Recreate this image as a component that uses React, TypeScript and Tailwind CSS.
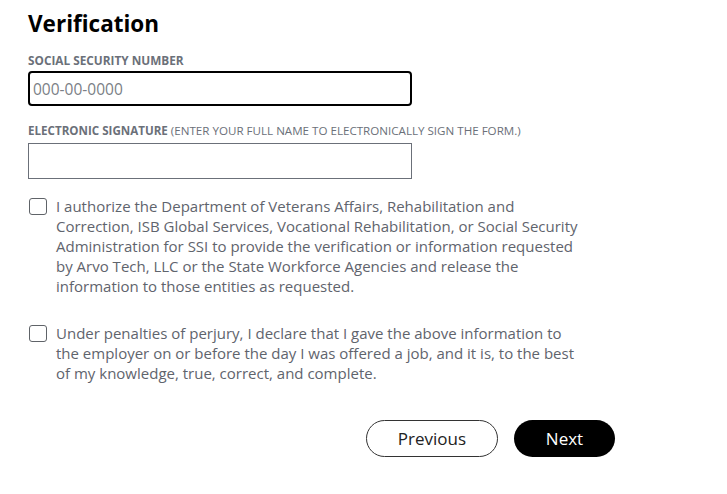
import { useState } from 'react';

const font = { fontFamily: '"Open Sans", "Noto Sans", Arial, sans-serif' };

function Check({ children }: { children: React.ReactNode }) {
  const [on, setOn] = useState(false);
  return (
    <label className="flex items-start gap-[9px] cursor-pointer">
      <button
        type="button"
        onClick={() => setOn(!on)}
        className="mt-[2px] ml-px w-[18px] h-[17px] shrink-0 rounded-[3px] border-[1.5px] border-[#5f6368] bg-white"
      >
        {on && (
          <svg viewBox="0 0 16 16" className="w-full h-full">
            <path d="M3 8l3.5 3.5L13 5" fill="none" stroke="#333" strokeWidth="2" />
          </svg>
        )}
      </button>
      <span className="text-[15px] leading-[20px] text-[#5f646d] w-[528px]">{children}</span>
    </label>
  );
}

export default function App() {
  return (
    <div className="min-h-screen bg-white" style={font}>
      <div className="pl-[28px] pt-[8px] w-[615px]">
        <h1 className="text-[22.5px] leading-[32px] font-bold text-black">Verification</h1>

        <div className="mt-[13px] text-[11.8px] leading-[14px] font-bold text-[#6b7079] uppercase">
          Social Security Number
        </div>
        <input
          placeholder="000-00-0000"
          className="mt-[4px] block w-[384px] h-[35px] px-[3px] border-2 border-black rounded-[4px] text-[15.5px] text-[#333] placeholder:text-[#7b7f86] outline-none"
        />

        <div className="mt-[18px] text-[11.6px] leading-[14px] text-[#6b7079] uppercase">
          <span className="font-bold">Electronic Signature</span> (Enter your full name to electronically sign the form.)
        </div>
        <input className="mt-[5px] block w-[384px] h-[36px] px-[3px] border border-[#6b7079] text-[15px] text-[#333] outline-none" />

        <div className="mt-[17px] flex flex-col gap-[27px]">
          <Check>
            I authorize the Department of Veterans Affairs, Rehabilitation and Correction, ISB Global Services,
            Vocational Rehabilitation, or Social Security Administration for SSI to provide the verification or
            information requested by Arvo Tech, LLC or the State Workforce Agencies and release the information to
            those entities as requested.
          </Check>
          <Check>
            Under penalties of perjury, I declare that I gave the above information to the employer on or before the
            day I was offered a job, and it is, to the best of my knowledge, true, correct, and complete.
          </Check>
        </div>

        <div className="mt-[37px] flex justify-end gap-[16px]">
          <button className="w-[132px] h-[37px] rounded-full border border-[#333] bg-white text-[17px] text-[#222]">
            Previous
          </button>
          <button className="w-[101px] h-[37px] rounded-full bg-black text-[17px] text-white">Next</button>
        </div>
      </div>
    </div>
  );
}
